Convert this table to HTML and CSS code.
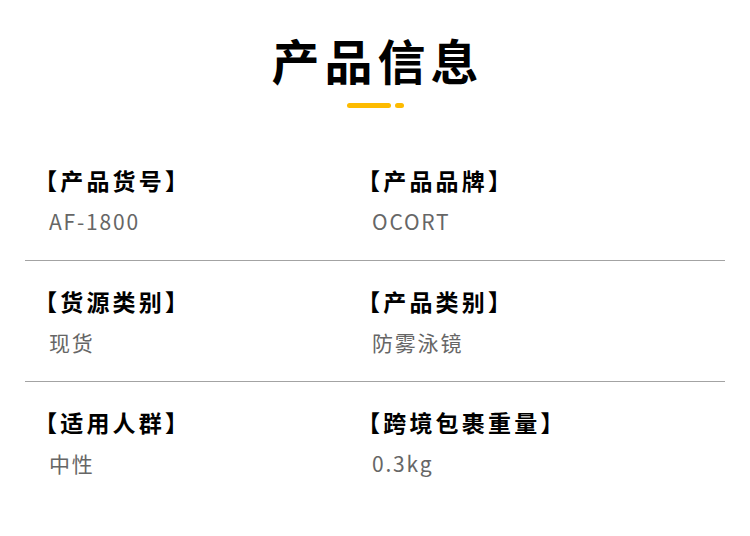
FILE: index.html
```html
<!DOCTYPE html>
<html lang="zh-CN">
<head>
<meta charset="utf-8">
<title>产品信息</title>
<link rel="stylesheet" href="styles.css">
</head>
<body>
<main class="page">
  <header class="head">
    <h1 class="title">产品信息</h1>
    <div class="accent"><span class="accent-bar"></span><span class="accent-dot"></span></div>
  </header>
  <section class="specs">
    <div class="row">
      <div class="cell">
        <div class="label">【产品货号】</div>
        <div class="value">AF-1800</div>
      </div>
      <div class="cell">
        <div class="label">【产品品牌】</div>
        <div class="value">OCORT</div>
      </div>
    </div>
    <div class="row">
      <div class="cell">
        <div class="label">【货源类别】</div>
        <div class="value">现货</div>
      </div>
      <div class="cell">
        <div class="label">【产品类别】</div>
        <div class="value">防雾泳镜</div>
      </div>
    </div>
    <div class="row row-last">
      <div class="cell">
        <div class="label">【适用人群】</div>
        <div class="value">中性</div>
      </div>
      <div class="cell">
        <div class="label">【跨境包裹重量】</div>
        <div class="value">0.3kg</div>
      </div>
    </div>
  </section>
</main>
</body>
</html>
```

FILE: styles.css
```css
* {
  box-sizing: border-box;
}

html, body {
  margin: 0;
  padding: 0;
  background: #ffffff;
}

body {
  font-family: "Noto Sans CJK SC", "Noto Sans", sans-serif;
  width: 750px;
  height: 536px;
  overflow: hidden;
}

.page {
  display: flex;
  flex-direction: column;
}

.head {
  display: flex;
  flex-direction: column;
  align-items: center;
  padding-top: 29px;
}

.title {
  margin: 0;
  font-size: 48px;
  line-height: 60px;
  font-weight: 700;
  color: #000000;
  letter-spacing: 5px;
  padding-left: 5px;
}

.accent {
  display: flex;
  gap: 4px;
  margin-top: 14px;
}

.accent-bar {
  width: 44px;
  height: 5px;
  border-radius: 3px;
  background: #fdbb00;
}

.accent-dot {
  width: 9px;
  height: 5px;
  border-radius: 3px;
  background: #fdbb00;
}

.specs {
  margin: 32px 25px 0;
  display: flex;
  flex-direction: column;
}

.row {
  display: grid;
  grid-template-columns: 323px 1fr;
  padding: 25px 0 24px 24px;
  border-bottom: 1px solid #a3a3a3;
}

.row-last {
  border-bottom: none;
}

.cell {
  display: flex;
  flex-direction: column;
  gap: 11px;
}

.label {
  font-size: 23px;
  line-height: 30px;
  font-weight: 700;
  color: #000000;
  letter-spacing: 3.2px;
  margin-left: -15px;
}

.value {
  font-size: 21px;
  line-height: 30px;
  font-weight: 400;
  color: #666666;
  letter-spacing: 1.8px;
}
```
